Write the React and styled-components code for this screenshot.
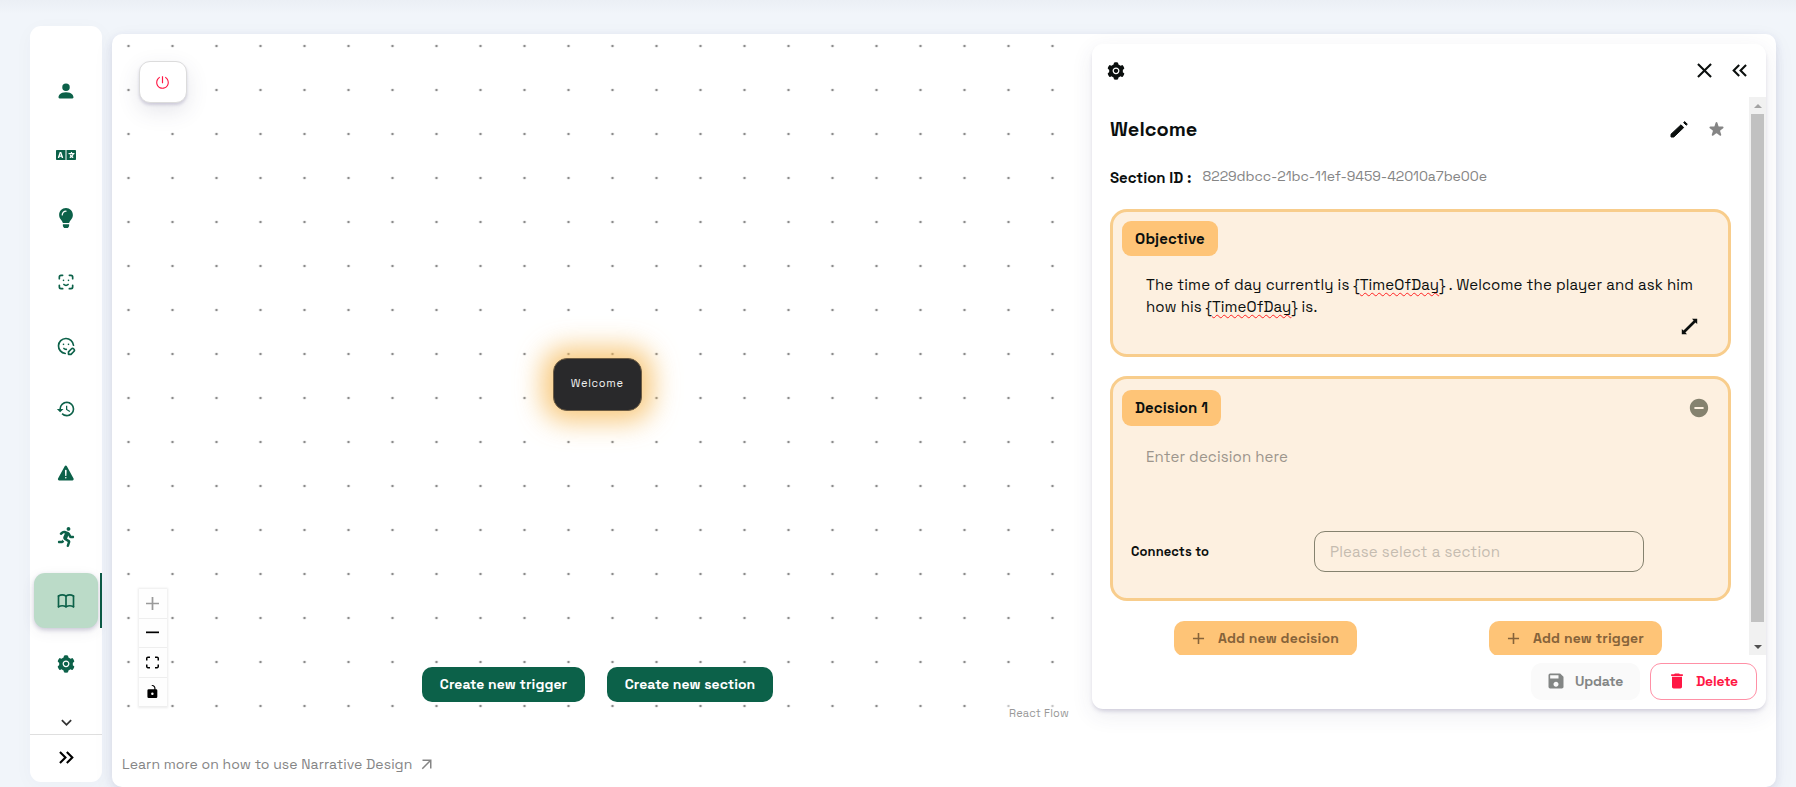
import React from "react";
import styled, { createGlobalStyle, css } from "styled-components";
import { BsPersonFill } from "react-icons/bs";
import { FaLanguage, FaLightbulb, FaRunning } from "react-icons/fa";
import { TbBook, TbFaceId, TbMoodEdit } from "react-icons/tb";
import {
  MdHistory, MdKeyboardArrowDown, MdKeyboardDoubleArrowRight, MdKeyboardDoubleArrowLeft,
  MdClose, MdRemoveCircle, MdSave, MdDelete, MdAdd, MdArrowOutward,
} from "react-icons/md";
import { IoWarning } from "react-icons/io5";
import { HiStar } from "react-icons/hi";
import { AiFillSetting, AiOutlinePoweroff } from "react-icons/ai";

const Global = createGlobalStyle`
  * { box-sizing: border-box; }
  body {
    margin: 0;
    overflow: hidden;
    font-family: "Space Grotesk", Inter, "Liberation Sans", sans-serif;
    background: linear-gradient(#ebeff5 0, #f1f5fa 14px);
    color: #0b0f0e;
  }
  button { font: inherit; border: 0; margin: 0; padding: 0; }
  svg { display: block; flex: none; }
`;

const Shell = styled.div`
  display: flex;
  gap: 10px;
  height: 787px;
  padding: 26px 20px 0 30px;
`;

const Sidebar = styled.nav`
  width: 72px;
  height: 756px;
  display: flex;
  flex-direction: column;
  background: #fff;
  border-radius: 11px;
  box-shadow: 0 4px 20px rgba(70, 70, 110, 0.03);
`;

const NavList = styled.div`
  flex: 1;
  display: flex;
  flex-direction: column;
  gap: 8.7px;
  padding: 37.5px 0 0 4px;
`;

const NavRow = styled.div`
  display: flex;
  justify-content: space-between;
  height: 55px;
`;

const NavButton = styled.button`
  width: 64px;
  display: flex;
  align-items: center;
  justify-content: center;
  border-radius: 11px;
  font-size: 20px;
  color: #0c6149;
  background: transparent;
  ${(p) => p.$active && css`
    background: #bbdbc8;
    box-shadow: 0 2px 4px rgba(60, 50, 110, 0.22), 0 4px 14px rgba(60, 60, 90, 0.08);
  `}
`;

const ActiveBar = styled.i`
  width: 2px;
  background: #0c5a45;
`;

const ScrollHint = styled.div`
  height: 26px;
  display: flex;
  justify-content: center;
  align-items: flex-start;
  padding-top: 3px;
  font-size: 21px;
  color: #333;
  border-bottom: 1px solid #dfdfdf;
`;

const ExpandButton = styled.button`
  height: 47px;
  display: flex;
  align-items: center;
  justify-content: center;
  padding-bottom: 2px;
  background: transparent;
  font-size: 25px;
  color: #000;
`;

const Card = styled.main`
  flex: 1;
  margin-top: 8px;
  display: flex;
  flex-direction: column;
  background: #fff;
  border-radius: 10px;
  box-shadow: 0 3px 8px rgba(60, 60, 120, 0.12), 0 6px 22px rgba(60, 60, 120, 0.05);
`;

const Workspace = styled.div`
  display: flex;
  gap: 10px;
  height: 689px;
  padding-right: 10px;
`;

const Canvas = styled.section`
  position: relative;
  flex: 1;
  border-radius: 10px 0 0 0;
  background-image: radial-gradient(circle at center, #8b8b8b 0.8px, rgba(145, 145, 145, 0) 1.7px);
  background-size: 44px 44px;
  background-position: -5.5px -10px;
`;

const PowerButton = styled.button`
  position: absolute;
  left: 27px;
  top: 27px;
  width: 48px;
  height: 42px;
  display: flex;
  align-items: center;
  justify-content: center;
  padding-right: 2px;
  border: 1px solid #dcdcdc;
  border-radius: 11px;
  background: #fff;
  color: #ff1744;
  font-size: 15px;
  box-shadow: 0 2px 3px rgba(60, 50, 110, 0.18), 0 8px 22px rgba(60, 60, 100, 0.13);
`;

const Node = styled.div`
  position: absolute;
  left: 441px;
  top: 324px;
  width: 88.5px;
  height: 53px;
  display: flex;
  align-items: center;
  justify-content: center;
  padding-bottom: 3px;
  border: 1px solid #6d5c42;
  border-radius: 14px;
  background: #29292b;
  color: #f0f0f0;
  box-shadow: 0 0 26px 11px rgba(246, 186, 88, 0.75);
`;

const Controls = styled.div`
  position: absolute;
  left: 27px;
  top: 555px;
  width: 28px;
  box-shadow: 0 0 2px 1px rgba(0, 0, 0, 0.08);
`;

const ControlButton = styled.button`
  width: 28px;
  height: 29.5px;
  display: flex;
  align-items: center;
  justify-content: center;
  padding-right: 1px;
  background: #fefefe;
  border-bottom: 1px solid #eee;
  color: ${(p) => (p.disabled ? "#9a9a9a" : "#000")};
  svg { width: 13px; height: 13px; fill: currentColor; }
`;

const CanvasActions = styled.div`
  position: absolute;
  left: 310px;
  top: 633px;
  display: flex;
  gap: 22px;
`;

const PrimaryButton = styled.button`
  width: ${(p) => p.$w}px;
  height: 35px;
  padding-bottom: 2px;
  border-radius: 10px;
  background: #0c6149;
  color: #fff;
`;

const Attribution = styled.div`
  position: absolute;
  right: 10px;
  top: 670px;
  height: 17px;
  display: flex;
  align-items: center;
  padding: 0 3px;
  background: rgba(255, 255, 255, 0.5);
  color: #999;
`;

const Panel = styled.aside`
  width: 674px;
  height: 665px;
  margin-top: 10px;
  display: flex;
  flex-direction: column;
  border-radius: 11px;
  background: #fff;
  box-shadow: 0 3px 4px -1px rgba(60, 50, 110, 0.2), 0 6px 22px rgba(60, 60, 100, 0.09);
`;

const PanelHeader = styled.header`
  height: 53px;
  display: flex;
  align-items: center;
  padding: 0 14px 0 14px;
  font-size: 20px;
`;

const HeaderTools = styled.div`
  margin-left: auto;
  display: flex;
  align-items: center;
  gap: 10px;
`;

const ScrollArea = styled.div`
  height: 558px;
  display: flex;
  overflow: hidden;
`;

const ScrollContent = styled.div`
  flex: 1;
  display: flex;
  flex-direction: column;
  padding: 0 18px;
  overflow: hidden;
`;

const Scrollbar = styled.div`
  width: 17px;
  display: flex;
  flex-direction: column;
  align-items: center;
  justify-content: space-between;
  background: #f1f1f1;
`;

const ScrollArrow = styled.i`
  height: 17px;
  display: flex;
  align-items: center;
  color: ${(p) => p.$color};
`;

const Thumb = styled.i`
  width: 13px;
  height: 508px;
  margin-bottom: 16px;
  background: #c1c1c1;
`;

const TitleRow = styled.div`
  height: 64px;
  flex: none;
  display: flex;
  align-items: center;
  padding: 0 5px 0 0;
`;

const TitleTools = styled.div`
  margin-left: auto;
  display: flex;
  align-items: center;
  gap: 19px;
  padding-top: 1px;
`;

const IdRow = styled.div`
  height: 48px;
  flex: none;
  display: flex;
  align-items: center;
  gap: 11px;
  padding: 0 0 16px 0;
`;

const SectionId = styled.div`
  color: #858585;
  padding-bottom: 4px;
`;

const Box = styled.section`
  height: ${(p) => p.$h}px;
  flex: none;
  margin-bottom: 19px;
  display: flex;
  flex-direction: column;
  border: 3px solid #f8cd8c;
  border-radius: 17px;
  background: #fdf0e0;
  padding: ${(p) => p.$pt}px 9px 0;
`;

const BoxHead = styled.div`
  display: flex;
  align-items: center;
  justify-content: space-between;
  padding-right: 9px;
`;

const Badge = styled.div`
  width: ${(p) => p.$w}px;
  height: ${(p) => p.$h}px;
  display: flex;
  align-items: center;
  justify-content: center;
  padding-bottom: 1px;
  border-radius: 9px;
  background: #fec477;
`;

const Body = styled.div`
  height: ${(p) => p.$h}px;
  padding: ${(p) => p.$pt}px 0 0 24px;
  line-height: 22px;
  color: ${(p) => p.$color || "#0b0f0e"};
`;

const Corner = styled.div`
  display: flex;
  justify-content: flex-end;
  padding-right: 21px;
`;

const Misspelt = styled.span`
  text-decoration: underline wavy #f22 1px;
  text-decoration-skip-ink: none;
  text-underline-offset: 2px;
`;

const ConnectRow = styled.div`
  display: flex;
  align-items: center;
  justify-content: space-between;
  padding: 0 75px 0 9px;
`;

const SelectBox = styled.div`
  width: 330px;
  height: 41px;
  display: flex;
  align-items: center;
  padding-left: 15px;
  border: 1px solid #85826f;
  border-radius: 11px;
  color: #c5bcb0;
`;

const AddRow = styled.div`
  display: flex;
  gap: 132px;
  padding: 1px 0 0 64px;
`;

const AddButton = styled.button`
  width: ${(p) => p.$w}px;
  height: 35px;
  flex: none;
  display: flex;
  align-items: center;
  gap: 10px;
  padding: 0 0 1px 15px;
  border-radius: 10px;
  background: #fec477;
  color: #86633a;
`;

const PanelFooter = styled.footer`
  flex: 1;
  display: flex;
  justify-content: flex-end;
  align-items: flex-start;
  gap: 10px;
  padding: 8px 9px 0 0;
`;

const FooterButton = styled.button`
  width: ${(p) => p.$w}px;
  height: 37px;
  display: flex;
  align-items: center;
  gap: ${(p) => p.$gap}px;
  padding: 0 0 1px ${(p) => p.$pl}px;
  border-radius: 11px;
  ${(p) => p.$danger
    ? css`border: 1px solid #ff90a6; background: #fff; color: #ff1744;`
    : css`background: #fafafa; color: #838685;`}
`;

const LearnMore = styled.div`
  flex: 1;
  display: flex;
  align-items: center;
  gap: 6px;
  padding: 18px 0 0 10px;
  color: #858585;
`;

const Text = styled.span`
  font-size: ${(p) => p.$size || 15}px;
  font-weight: ${(p) => (p.$bold ? 700 : 400)};
  letter-spacing: ${(p) => p.$ls || 0}px;
  white-space: nowrap;
`;

const navIcons = [
  BsPersonFill, FaLanguage, FaLightbulb, TbFaceId, TbMoodEdit,
  MdHistory, IoWarning, FaRunning, TbBook, AiFillSetting,
];

const controls = [
  ["0 0 32 32", "M32 18.133H18.133V32h-4.266V18.133H0v-4.266h13.867V0h4.266v13.867H32z"],
  ["0 0 32 5", "M0 0h32v4.2H0z"],
  ["0 0 32 30", "M3.692 4.63c0-.53.4-.938.939-.938h5.215V0H4.708C2.13 0 0 2.054 0 4.63v5.216h3.692V4.631zM27.354 0h-5.2v3.692h5.17c.53 0 .984.4.984.939v5.215H32V4.631A4.624 4.624 0 0027.354 0zm.954 24.83c0 .532-.4.94-.939.94h-5.215v3.768h5.215c2.577 0 4.631-2.13 4.631-4.707v-5.139h-3.692v5.139zm-23.677.94c-.531 0-.939-.4-.939-.94v-5.138H0v5.139c0 2.577 2.13 4.707 4.708 4.707h5.138V25.77H4.631z"],
  ["0 0 25 32", "M21.333 10.667H19.81V7.619C19.81 3.429 16.38 0 12.19 0c-4.114 1.828-1.37 2.133.305 2.438 1.676.305 4.42 2.59 4.42 5.181v3.048H3.047A3.056 3.056 0 000 13.714v15.238A3.056 3.056 0 003.048 32h18.285a3.056 3.056 0 003.048-3.048V13.714a3.056 3.056 0 00-3.048-3.047zM12.19 24.533a3.056 3.056 0 01-3.047-3.047 3.056 3.056 0 013.047-3.048 3.056 3.056 0 013.048 3.048 3.056 3.056 0 01-3.048 3.047z"],
];

const ExpandArrows = () => (
  <svg width="17" height="17" viewBox="0 0 17 17" fill="currentColor">
    <path d="M11 .8h5.2V6l-1.7-1.6L4.4 14.5 6 16.2H.8V11l1.7 1.6L12.6 2.5z" />
  </svg>
);

const Pencil = () => (
  <svg width="18" height="17" viewBox="0 0 18 17" fill="currentColor" stroke="currentColor" strokeLinejoin="round">
    <path d="M1 16v-2.8L11 3.8l2.7 2.8L3.8 16z" />
    <path d="M13.6 1.6l1.1-1 2.6 2.6-1.1 1z" />
  </svg>
);

const Triangle = ({ up }) => (
  <svg width="8" height="4" viewBox="0 0 8 4" fill="currentColor">
    <path d={up ? "M4 0l4 4H0z" : "M0 0h8L4 4z"} />
  </svg>
);

export default function App() {
  return (
    <>
      <Global />
      <Shell>
        <Sidebar>
          <NavList>
            {navIcons.map((Icon, i) => (
              <NavRow key={i}>
                <NavButton $active={i === 8}><Icon /></NavButton>
                {i === 8 && <ActiveBar />}
              </NavRow>
            ))}
          </NavList>
          <ScrollHint><MdKeyboardArrowDown /></ScrollHint>
          <ExpandButton><MdKeyboardDoubleArrowRight /></ExpandButton>
        </Sidebar>
        <Card>
          <Workspace>
            <Canvas>
              <PowerButton><AiOutlinePoweroff /></PowerButton>
              <Node><Text $size={11} $ls={0.7}>Welcome</Text></Node>
              <Controls>
                {controls.map(([box, d], i) => (
                  <ControlButton key={i} disabled={i === 0}>
                    <svg viewBox={box}><path d={d} /></svg>
                  </ControlButton>
                ))}
              </Controls>
              <CanvasActions>
                <PrimaryButton $w={163}><Text $size={14} $ls={0.07} $bold>Create new trigger</Text></PrimaryButton>
                <PrimaryButton $w={166}><Text $size={14} $ls={0.05} $bold>Create new section</Text></PrimaryButton>
              </CanvasActions>
              <Attribution><Text $size={11} $ls={0.2}>React Flow</Text></Attribution>
            </Canvas>
            <Panel>
              <PanelHeader>
                <AiFillSetting />
                <HeaderTools>
                  <MdClose size={25} />
                  <MdKeyboardDoubleArrowLeft size={25} />
                </HeaderTools>
              </PanelHeader>
              <ScrollArea>
                <ScrollContent>
                  <TitleRow>
                    <Text $size={20} $bold>Welcome</Text>
                    <TitleTools><Pencil /><HiStar size={19} color="#858585" /></TitleTools>
                  </TitleRow>
                  <IdRow>
                    <Text $bold>Section ID :</Text>
                    <SectionId><Text $size={14} $ls={-0.06}>8229dbcc-21bc-11ef-9459-42010a7be00e</Text></SectionId>
                  </IdRow>
                  <Box $h={148} $pt={9}>
                    <BoxHead><Badge $w={96} $h={35}><Text $ls={0.15} $bold>Objective</Text></Badge></BoxHead>
                    <Body $h={62} $pt={18}>
                      <Text $ls={0.13}>The time of day currently is {"{"}<Misspelt>TimeOfDay</Misspelt>{"}"} . Welcome the player and ask him</Text><br />
                      <Text $ls={0.12}>how his {"{"}<Misspelt>TimeOfDay</Misspelt>{"}"} is.</Text>
                    </Body>
                    <Corner><ExpandArrows /></Corner>
                  </Box>
                  <Box $h={225} $pt={11}>
                    <BoxHead>
                      <Badge $w={99} $h={36}><Text $ls={0.07} $bold>Decision 1</Text></Badge>
                      <MdRemoveCircle size={22} color="#85826f" />
                    </BoxHead>
                    <Body $h={105} $pt={20} $color="#9c958c"><Text $ls={0.11}>Enter decision here</Text></Body>
                    <ConnectRow>
                      <Text $size={13} $ls={0.1} $bold>Connects to</Text>
                      <SelectBox><Text $ls={0.15}>Please select a section</Text></SelectBox>
                    </ConnectRow>
                  </Box>
                  <AddRow>
                    <AddButton $w={183}><MdAdd size={19} /><Text $size={14} $ls={0.14} $bold>Add new decision</Text></AddButton>
                    <AddButton $w={173}><MdAdd size={19} /><Text $size={14} $ls={0.15} $bold>Add new trigger</Text></AddButton>
                  </AddRow>
                </ScrollContent>
                <Scrollbar>
                  <ScrollArrow $color="#a3a3a3"><Triangle up /></ScrollArrow>
                  <Thumb />
                  <ScrollArrow $color="#505050"><Triangle /></ScrollArrow>
                </Scrollbar>
              </ScrollArea>
              <PanelFooter>
                <FooterButton $w={109} $pl={15} $gap={9}><MdSave size={20} /><Text $size={14} $ls={-0.15} $bold>Update</Text></FooterButton>
                <FooterButton $danger $w={107} $pl={16} $gap={9}><MdDelete size={20} /><Text $size={14} $ls={-0.2} $bold>Delete</Text></FooterButton>
              </PanelFooter>
            </Panel>
          </Workspace>
          <LearnMore>
            <Text $size={14} $ls={0.05}>Learn more on how to use Narrative Design</Text>
            <MdArrowOutward size={18} />
          </LearnMore>
        </Card>
      </Shell>
    </>
  );
}
